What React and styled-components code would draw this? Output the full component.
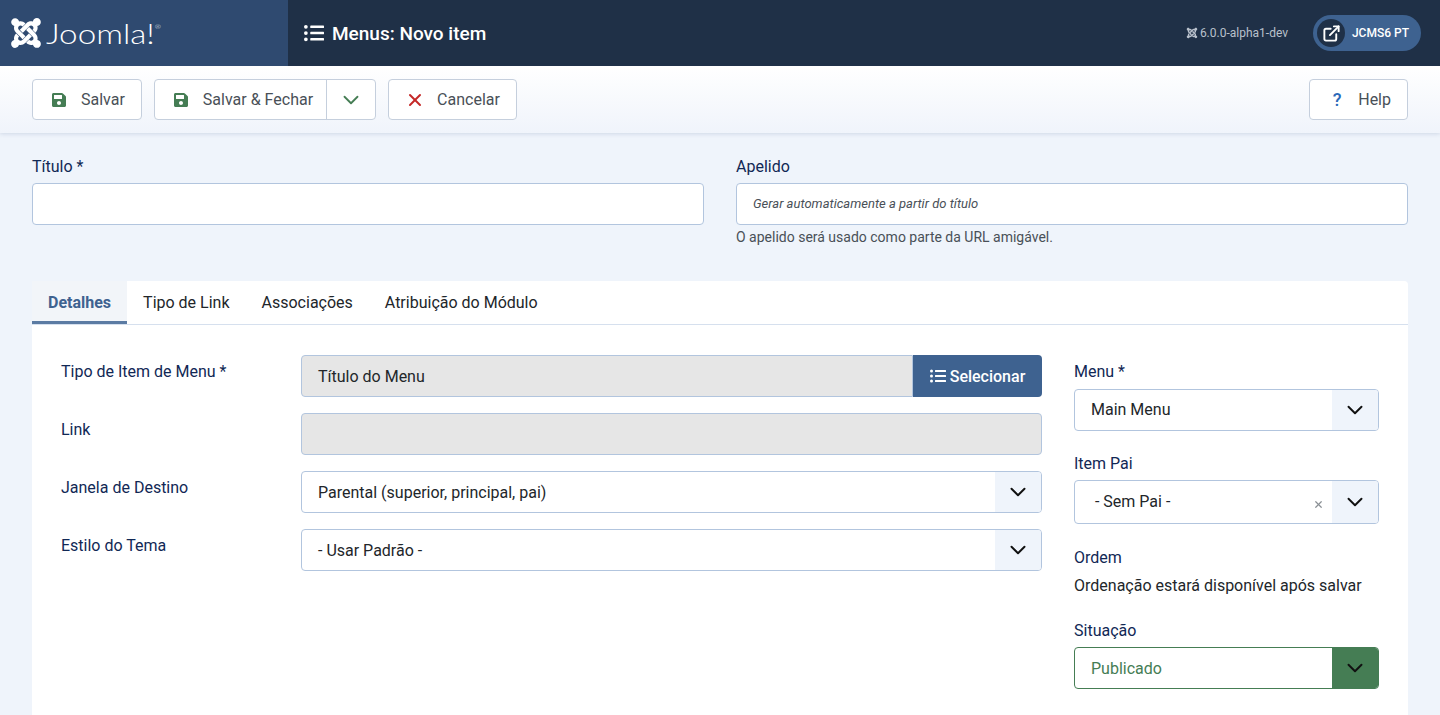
import styled, { createGlobalStyle } from 'styled-components'
import { ChevronDown, ExternalLink, X } from 'lucide-react'
import { FaJoomla, FaListUl, FaSave } from 'react-icons/fa'

const GlobalStyle = createGlobalStyle`
  html, body {
    margin: 0;
    height: 100%;
    overflow: hidden;
    background: #eff4fb;
    font-family: Roboto, "Liberation Sans", sans-serif;
    font-size: 16px;
    color: #22262a;
  }
  * { box-sizing: border-box; }
`

const Header = styled.header`
  display: flex;
  height: 66px;
  background: #1f3047;
  color: #fff;
`
const LogoBox = styled.div`
  display: flex;
  align-items: center;
  gap: 3px;
  width: 288px;
  padding-left: 9px;
  background: #2f4a70;
`
const Wordmark = styled.span`
  font-family: Lato, sans-serif;
  font-weight: 300;
  font-size: 27px;
  line-height: 1;
  transform: scaleX(1.23);
  transform-origin: left center;
  sup {
    font-size: 6px;
    vertical-align: 15px;
    line-height: 0;
  }
`
const PageTitle = styled.h1`
  display: flex;
  align-items: center;
  gap: 8px;
  margin: 0 0 0 16px;
  font-size: 19px;
  font-weight: 500;
`
const HeaderRight = styled.div`
  display: flex;
  align-items: center;
  margin-left: auto;
  padding-right: 19px;
`
const Version = styled.span`
  display: flex;
  align-items: center;
  gap: 2px;
  margin-right: 25px;
  font-size: 12px;
  color: #b9c1cc;
`
const UserPill = styled.div`
  display: flex;
  align-items: center;
  justify-content: space-between;
  height: 36px;
  width: 108px;
  padding: 0 12px 0 4px;
  border-radius: 18px;
  background: #3e6290;
  font-size: 12px;
  font-weight: 500;
`
const UserIcon = styled.span`
  display: flex;
  align-items: center;
  justify-content: center;
  width: 28px;
  height: 28px;
  border-radius: 50%;
  background: #1f3047;
`

const Toolbar = styled.div`
  display: flex;
  align-items: center;
  gap: 12px;
  height: 67px;
  padding: 0 32px;
  background: linear-gradient(#fff, #f0f4fb);
  box-shadow: 0 1px 4px rgba(60, 90, 140, 0.18);
`
const ToolButton = styled.button`
  display: flex;
  align-items: center;
  gap: ${p => p.$gap || 14}px;
  height: 41px;
  padding: 0 16px 0 ${p => p.$pad || 18}px;
  border: 1px solid #c5cfdd;
  border-radius: 4px;
  background: #fff;
  font: 400 16px Roboto, sans-serif;
  color: #495057;
  ${p => p.$right && 'margin-left: auto;'}
`
const SplitGroup = styled.div`
  display: flex;
  height: 41px;
  border: 1px solid #c5cfdd;
  border-radius: 4px;
  background: #fff;
`
const SplitMain = styled.div`
  display: flex;
  align-items: center;
  gap: 14px;
  padding: 0 13px 0 18px;
  color: #495057;
`
const SplitToggle = styled.div`
  display: flex;
  align-items: center;
  justify-content: center;
  width: 49px;
  border-left: 1px solid #c5cfdd;
  color: #457d54;
`
const HelpMark = styled.span`
  width: 12px;
  color: #2a69b8;
  font-size: 18px;
  font-weight: 500;
`

const Main = styled.main`
  padding: 24px 32px 0;
`
const TopFields = styled.div`
  display: grid;
  grid-template-columns: 1fr 1fr;
  gap: 32px;
  height: 124px;
`
const Label = styled.label`
  display: block;
  height: ${p => p.$h || 26}px;
  line-height: 19px;
  color: #112855;
  font-size: 16px;
`
const TextInput = styled.div`
  display: flex;
  align-items: center;
  height: 42px;
  padding: 0 16px 2px;
  border: 1px solid #b2c5de;
  border-radius: 4px;
  background: #fff;
  color: #495057;
  font-size: 13px;
  font-style: italic;
`
const Hint = styled.div`
  margin-top: 2px;
  font-size: 14px;
  color: #495057;
  line-height: 20px;
`

const Card = styled.section`
  background: #fff;
  border-radius: 4px 4px 0 0;
`
const Tabs = styled.nav`
  display: flex;
  height: 44px;
  border-bottom: 1px solid #d6e0ee;
`
const Tab = styled.div`
  display: flex;
  align-items: center;
  height: 43px;
  padding: 0 16px;
  font-size: 16px;
  color: ${p => (p.$active ? '#3e6290' : '#22262a')};
  font-weight: ${p => (p.$active ? 700 : 400)};
  background: ${p => (p.$active ? '#f2f5f9' : 'transparent')};
  box-shadow: ${p => (p.$active ? 'inset 0 -3px 0 #5b7ba3' : 'none')};
`
const Body = styled.div`
  display: grid;
  grid-template-columns: 981px 305px;
  justify-content: space-between;
  padding: 30px 29px 40px;
`
const FormRow = styled.div`
  display: flex;
  margin-bottom: 16px;
`
const RowLabel = styled.label`
  width: 240px;
  padding-top: 7px;
  line-height: 19px;
  color: #112855;
`
const Control = styled.div`
  display: flex;
  width: 741px;
`
const ReadOnly = styled.div`
  flex: 1;
  display: flex;
  align-items: center;
  height: 42px;
  padding: 0 16px;
  background: #e6e6e6;
  border: 1px solid #b2c5de;
  border-radius: ${p => (p.$joined ? '4px 0 0 4px' : '4px')};
  color: #22262a;
`
const SelectButton = styled.div`
  display: flex;
  align-items: center;
  justify-content: center;
  gap: 4px;
  width: 129px;
  height: 42px;
  background: #3e6290;
  border-radius: 0 4px 4px 0;
  color: #fff;
  font-weight: 500;
`
const SelectBox = styled.div`
  position: relative;
  display: flex;
  align-items: center;
  width: 100%;
  height: ${p => p.$h || 42}px;
  padding-left: 16px;
  border: 1px solid ${p => (p.$success ? '#457d54' : '#b2c5de')};
  border-radius: 4px;
  background: #fff;
  color: ${p => (p.$success ? '#457d54' : '#22262a')};
  overflow: hidden;
`
const SelectValue = styled.span`
  padding-bottom: ${p => (p.$raised ? 2 : 0)}px;
`
const Arrow = styled.span`
  display: flex;
  align-items: center;
  justify-content: center;
  width: 46px;
  height: 100%;
  margin-left: auto;
  color: #111;
  background: ${p => (p.$success ? '#457d54' : '#eff4fb')};
`
const ClearMark = styled.span`
  position: absolute;
  right: 54px;
  top: 18px;
  display: flex;
  color: #8a8f94;
`
const Side = styled.div`
  padding-top: 7px;
`
const SideField = styled.div`
  margin-bottom: ${p => p.$mb ?? 23}px;
`
const StaticText = styled.div`
  line-height: 19px;
`

const Select = ({ value, success, height, clear, raised }) => (
  <SelectBox $success={success} $h={height}>
    <SelectValue $raised={raised}>{value}</SelectValue>
    {clear && <ClearMark><X size={11} strokeWidth={2.6} /></ClearMark>}
    <Arrow $success={success}><ChevronDown size={26} strokeWidth={1.8} /></Arrow>
  </SelectBox>
)

export default function App() {
  return (
    <>
      <GlobalStyle />
      <Header>
        <LogoBox>
          <FaJoomla size={34} />
          <Wordmark>Joomla!<sup>®</sup></Wordmark>
        </LogoBox>
        <PageTitle><FaListUl size={20} />Menus: Novo item</PageTitle>
        <HeaderRight>
          <Version><FaJoomla size={12} />6.0.0-alpha1-dev</Version>
          <UserPill>
            <UserIcon><ExternalLink size={19} color="#fff" strokeWidth={2.4} /></UserIcon>
            JCMS6 PT
          </UserPill>
        </HeaderRight>
      </Header>

      <Toolbar>
        <ToolButton><FaSave size={16} color="#457d54" />Salvar</ToolButton>
        <SplitGroup>
          <SplitMain><FaSave size={16} color="#457d54" />Salvar &amp; Fechar</SplitMain>
          <SplitToggle><ChevronDown size={26} strokeWidth={1.7} /></SplitToggle>
        </SplitGroup>
        <ToolButton $pad={16} $gap={12}><X size={20} color="#c52827" strokeWidth={2.4} />Cancelar</ToolButton>
        <ToolButton $right $pad={21} $gap={15}>
          <HelpMark>?</HelpMark>Help
        </ToolButton>
      </Toolbar>

      <Main>
        <TopFields>
          <div>
            <Label>Título *</Label>
            <TextInput />
          </div>
          <div>
            <Label>Apelido</Label>
            <TextInput>Gerar automaticamente a partir do título</TextInput>
            <Hint>O apelido será usado como parte da URL amigável.</Hint>
          </div>
        </TopFields>

        <Card>
          <Tabs>
            <Tab $active>Detalhes</Tab>
            <Tab>Tipo de Link</Tab>
            <Tab>Associações</Tab>
            <Tab>Atribuição do Módulo</Tab>
          </Tabs>
          <Body>
            <div>
              <FormRow>
                <RowLabel>Tipo de Item de Menu *</RowLabel>
                <Control>
                  <ReadOnly $joined>Título do Menu</ReadOnly>
                  <SelectButton><FaListUl size={16} />Selecionar</SelectButton>
                </Control>
              </FormRow>
              <FormRow>
                <RowLabel>Link</RowLabel>
                <Control><ReadOnly /></Control>
              </FormRow>
              <FormRow>
                <RowLabel>Janela de Destino</RowLabel>
                <Control><Select value="Parental (superior, principal, pai)" /></Control>
              </FormRow>
              <FormRow>
                <RowLabel>Estilo do Tema</RowLabel>
                <Control><Select value="- Usar Padrão -" /></Control>
              </FormRow>
            </div>
            <Side>
              <SideField>
                <Label $h={27}>Menu *</Label>
                <Select value="Main Menu" raised />
              </SideField>
              <SideField $mb={24}>
                <Label>Item Pai</Label>
                <Select value={'\u00a0- Sem Pai -'} height={44} clear raised />
              </SideField>
              <SideField $mb={26}>
                <Label $h={28}>Ordem</Label>
                <StaticText>Ordenação estará disponível após salvar</StaticText>
              </SideField>
              <SideField $mb={0}>
                <Label>Situação</Label>
                <Select value="Publicado" success />
              </SideField>
            </Side>
          </Body>
        </Card>
      </Main>
    </>
  )
}
